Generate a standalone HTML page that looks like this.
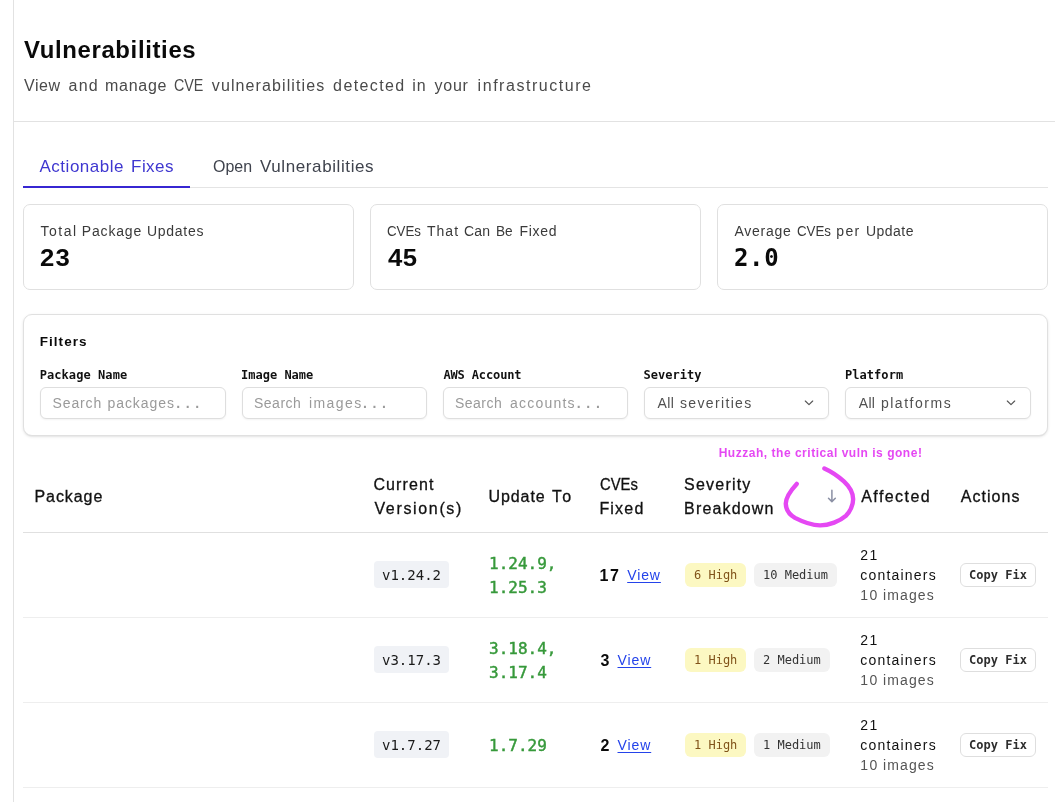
<!DOCTYPE html>
<html lang="en">
<head>
<meta charset="utf-8">
<title>Vulnerabilities</title>
<style>
*{box-sizing:border-box;margin:0;padding:0}
html,body{width:1055px;height:802px;overflow:hidden;background:#fff}
body{font-family:"Liberation Sans",sans-serif;color:#0a0a0a;position:relative}
h1,p,label{font-weight:400;font-size:16px}
#app{position:absolute;left:0;top:0;width:1055px;height:802px;will-change:transform}
.t{position:absolute;white-space:nowrap;line-height:20px}
.s{font-family:"Liberation Sans",sans-serif}
.m,.mono{font-family:"DejaVu Sans Mono","Liberation Mono",monospace}
.vline{position:absolute;left:13px;top:0;width:1px;height:802px;background:#e2e2e2}
.hline{position:absolute;left:13px;top:121px;width:1042px;height:1px;background:#e2e2e2}
.tabline{position:absolute;left:23px;top:187px;width:1025px;height:1px;background:#e4e4e4}
.tabsel{position:absolute;left:23px;top:186px;width:167px;height:2px;background:#3726d2}
.card{position:absolute;top:204px;width:331px;height:86px;border:1px solid #e0e0e0;border-radius:7px;background:#fff}
.filters{position:absolute;left:23px;top:314px;width:1025px;height:122px;border:1px solid #e0e0e0;border-radius:9px;background:#fff;box-shadow:0 1px 3px rgba(0,0,0,.1),0 1px 2px -1px rgba(0,0,0,.1)}
.fi{position:absolute;top:387px;height:32px;border:1px solid #dedede;border-radius:6px;background:#fff;box-shadow:0 1px 2px rgba(0,0,0,.05)}
.chev{position:absolute;top:398px;width:12px;height:10px}
.rowline{position:absolute;left:23px;width:1025px;height:1px;background:#eee}
.vb{position:absolute;left:374px;width:75px;height:27px;border-radius:4px;background:#f0f2f6;font-size:14px;line-height:29px;text-align:center;color:#1a1a1a}
.up{position:absolute;left:489px;font-size:16px;line-height:24px;font-weight:400;-webkit-text-stroke:.45px #37993b;color:#37993b;white-space:nowrap}
.bh,.bm{position:absolute;height:24px;border-radius:6px;font-size:12px;line-height:24px;padding:0 9px;white-space:nowrap}
.bh{left:685px;background:#fcf8c2;color:#80531a}
.bm{left:754px;background:#f2f2f2;color:#333}
.btn{position:absolute;left:960px;width:76px;height:24px;border:1px solid #dedede;border-radius:6px;font-size:12px;line-height:22px;font-weight:700;text-align:center;color:#2e2e2e;white-space:nowrap;background:#fff}
.arrow{position:absolute;left:827px;top:484px;font-size:14px;line-height:24px;color:#9095a8}
svg.ann{position:absolute;left:770px;top:455px}
</style>
</head>
<body>
<div id="app">
<div class="vline"></div>
<div class="hline"></div>
<div class="tabline"></div>
<div class="tabsel"></div>
<div class="card" style="left:23px"></div>
<div class="card" style="left:370px"></div>
<div class="card" style="left:717px"></div>
<div class="filters"></div>
<div class="fi" style="left:40px;width:186px"></div>
<div class="fi" style="left:242px;width:185px"></div>
<div class="fi" style="left:443px;width:185px"></div>
<div class="fi" style="left:644px;width:185px"></div>
<div class="fi" style="left:845px;width:186px"></div>
<svg class="chev" style="left:803px" viewBox="0 0 12 10"><path d="M2.3 3 L6 6.7 L9.7 3" fill="none" stroke="#555" stroke-width="1.15" stroke-linecap="round" stroke-linejoin="round"/></svg>
<svg class="chev" style="left:1005px" viewBox="0 0 12 10"><path d="M2.3 3 L6 6.7 L9.7 3" fill="none" stroke="#555" stroke-width="1.15" stroke-linecap="round" stroke-linejoin="round"/></svg>
<div class="rowline" style="top:532px;background:#e0e0e0"></div>
<div class="rowline" style="top:617px"></div>
<div class="rowline" style="top:702px"></div>
<div class="rowline" style="top:787px"></div>

<div class="vb mono" style="top:561px">v1.24.2</div>
<div class="up mono" style="top:552px">1.24.9,<br>1.25.3</div>
<div class="bh mono" style="top:563px">6 High</div>
<div class="bm mono" style="top:563px">10 Medium</div>
<div class="btn mono" style="top:563px">Copy Fix</div>
<div class="vb mono" style="top:646px">v3.17.3</div>
<div class="up mono" style="top:637px">3.18.4,<br>3.17.4</div>
<div class="bh mono" style="top:648px">1 High</div>
<div class="bm mono" style="top:648px">2 Medium</div>
<div class="btn mono" style="top:648px">Copy Fix</div>
<div class="vb mono" style="top:731px">v1.7.27</div>
<div class="up mono" style="top:734px">1.7.29</div>
<div class="bh mono" style="top:733px">1 High</div>
<div class="bm mono" style="top:733px">1 Medium</div>
<div class="btn mono" style="top:733px">Copy Fix</div>

<svg class="ann" width="100" height="80" viewBox="770 455 100 80" role="img" aria-label="sorted descending"><path d="M831.9 490.3V501.3M828.5 498.2L831.9 501.6L835.3 498.2" fill="none" stroke="#8b90a4" stroke-width="1.5" stroke-linecap="round" stroke-linejoin="round"/></svg>
<svg class="ann" width="100" height="80" viewBox="770 455 100 80"><path d="M824.4 468.5 C830 471 839 477 843.9 481.4 C850 487 853 493 853.1 498.9 C853.3 505 850 512 845.8 515.9 C840 521 829 525.5 819.9 525.4 C812 525.3 802 521.5 795 517.9 C790 515 786 510 785.8 503.9 C785.6 497 792 489 796.7 483.9" fill="none" stroke="#e548f3" stroke-width="4.4" stroke-linecap="round" stroke-linejoin="round"/></svg>
<h1><span class="t s" style="left:23.5px;top:39.6px;font-size:23px;font-weight:700;letter-spacing:0.62px;transform:scaleX(1.040);transform-origin:0 0;color:#0a0a0a;">Vulnerabilities</span></h1>
<p><span class="t s" style="left:24.1px;top:76.0px;font-size:16px;letter-spacing:0.50px;color:#4a4a4a;">View</span> <span class="t s" style="left:68.6px;top:76.0px;font-size:16px;letter-spacing:1.15px;color:#4a4a4a;">and</span> <span class="t s" style="left:105.0px;top:76.0px;font-size:16px;letter-spacing:0.74px;color:#4a4a4a;">manage</span> <span class="t s" style="left:174.1px;top:76.0px;font-size:16px;transform:scaleX(0.894);transform-origin:0 0;color:#4a4a4a;">CVE</span> <span class="t s" style="left:211.8px;top:76.0px;font-size:16px;letter-spacing:1.10px;color:#4a4a4a;">vulnerabilities</span> <span class="t s" style="left:333.1px;top:76.0px;font-size:16px;letter-spacing:1.39px;color:#4a4a4a;">detected</span> <span class="t s" style="left:412.2px;top:76.0px;font-size:16px;letter-spacing:0.90px;color:#4a4a4a;">in</span> <span class="t s" style="left:434.5px;top:76.0px;font-size:16px;letter-spacing:0.77px;color:#4a4a4a;">your</span> <span class="t s" style="left:477.6px;top:76.0px;font-size:16px;letter-spacing:1.54px;color:#4a4a4a;">infrastructure</span></p>
<div><span class="t s" style="left:39.5px;top:157.0px;font-size:17px;letter-spacing:0.51px;color:#3f37d0;">Actionable</span> <span class="t s" style="left:131.1px;top:157.0px;font-size:17px;letter-spacing:0.43px;color:#3f37d0;">Fixes</span></div>
<div><span class="t s" style="left:213.3px;top:157.0px;font-size:17px;transform:scaleX(0.938);transform-origin:0 0;color:#3f434d;">Open</span> <span class="t s" style="left:260.0px;top:157.0px;font-size:17px;letter-spacing:0.60px;color:#3f434d;">Vulnerabilities</span></div>
<div><span class="t s" style="left:40.6px;top:221.0px;font-size:14px;letter-spacing:1.47px;color:#3a3a3a;">Total</span> <span class="t s" style="left:81.8px;top:221.0px;font-size:14px;letter-spacing:0.83px;color:#3a3a3a;">Package</span> <span class="t s" style="left:147.0px;top:221.0px;font-size:14px;letter-spacing:0.72px;color:#3a3a3a;">Updates</span></div>
<div><span class="t s" style="left:39.5px;top:248.1px;font-size:24px;font-weight:700;letter-spacing:1.17px;transform:scaleX(1.070);transform-origin:0 0;color:#0a0a0a;">23</span></div>
<div><span class="t s" style="left:386.6px;top:221.0px;font-size:14px;transform:scaleX(0.950);transform-origin:0 0;color:#3a3a3a;">CVEs</span> <span class="t s" style="left:427.1px;top:221.0px;font-size:14px;letter-spacing:0.97px;color:#3a3a3a;">That</span> <span class="t s" style="left:464.1px;top:221.0px;font-size:14px;letter-spacing:0.10px;color:#3a3a3a;">Can</span> <span class="t s" style="left:496.0px;top:221.0px;font-size:14px;transform:scaleX(0.975);transform-origin:0 0;color:#3a3a3a;">Be</span> <span class="t s" style="left:519.4px;top:221.0px;font-size:14px;letter-spacing:0.75px;color:#3a3a3a;">Fixed</span></div>
<div><span class="t s" style="left:387.5px;top:248.1px;font-size:24px;font-weight:700;letter-spacing:0.36px;transform:scaleX(1.070);transform-origin:0 0;color:#0a0a0a;">45</span></div>
<div><span class="t s" style="left:734.5px;top:221.0px;font-size:14px;letter-spacing:0.72px;color:#3a3a3a;">Average</span> <span class="t s" style="left:796.5px;top:221.0px;font-size:14px;transform:scaleX(0.950);transform-origin:0 0;color:#3a3a3a;">CVEs</span> <span class="t s" style="left:836.3px;top:221.0px;font-size:14px;letter-spacing:1.35px;color:#3a3a3a;">per</span> <span class="t s" style="left:865.9px;top:221.0px;font-size:14px;letter-spacing:0.50px;color:#3a3a3a;">Update</span></div>
<div><span class="t m" style="left:733.9px;top:248.1px;font-size:24px;font-weight:700;letter-spacing:0.70px;color:#0a0a0a;">2.0</span></div>
<div><span class="t s" style="left:39.7px;top:331.9px;font-size:13.5px;font-weight:700;letter-spacing:1.05px;color:#0a0a0a;">Filters</span></div>
<label><span class="t m" style="left:39.7px;top:365.2px;font-size:12px;font-weight:700;letter-spacing:0.07px;color:#111;">Package Name</span></label>
<label><span class="t m" style="left:241.1px;top:365.2px;font-size:12px;font-weight:700;letter-spacing:-0.01px;color:#111;">Image Name</span></label>
<label><span class="t m" style="left:443.4px;top:365.2px;font-size:12px;font-weight:700;letter-spacing:-0.13px;color:#111;">AWS Account</span></label>
<label><span class="t m" style="left:643.5px;top:365.2px;font-size:12px;font-weight:700;letter-spacing:0.03px;color:#111;">Severity</span></label>
<label><span class="t m" style="left:844.9px;top:365.2px;font-size:12px;font-weight:700;letter-spacing:0.07px;color:#111;">Platform</span></label>
<div><span class="t s" style="left:52.5px;top:393.2px;font-size:14px;letter-spacing:0.88px;color:#9a9a9a;">Search</span> <span class="t s" style="left:107.4px;top:393.2px;font-size:14px;letter-spacing:0.97px;color:#9a9a9a;">packages</span> <span class="t s" style="left:176.2px;top:393.2px;font-size:14px;font-weight:700;letter-spacing:5.65px;color:#9a9a9a;">...</span></div>
<div><span class="t s" style="left:254.0px;top:393.2px;font-size:14px;letter-spacing:0.50px;color:#9a9a9a;">Search</span> <span class="t s" style="left:308.9px;top:393.2px;font-size:14px;letter-spacing:1.44px;color:#9a9a9a;">images</span> <span class="t s" style="left:363.0px;top:393.2px;font-size:14px;font-weight:700;letter-spacing:5.60px;color:#9a9a9a;">...</span></div>
<div><span class="t s" style="left:454.9px;top:393.2px;font-size:14px;letter-spacing:0.50px;color:#9a9a9a;">Search</span> <span class="t s" style="left:509.9px;top:393.2px;font-size:14px;letter-spacing:1.24px;color:#9a9a9a;">accounts</span> <span class="t s" style="left:576.7px;top:393.2px;font-size:14px;font-weight:700;letter-spacing:5.75px;color:#9a9a9a;">...</span></div>
<div><span class="t s" style="left:657.4px;top:392.8px;font-size:14px;letter-spacing:0.50px;color:#505050;">All</span> <span class="t s" style="left:679.9px;top:392.8px;font-size:14px;letter-spacing:1.36px;color:#505050;">severities</span></div>
<div><span class="t s" style="left:858.8px;top:392.8px;font-size:14px;letter-spacing:0.25px;color:#505050;">All</span> <span class="t s" style="left:880.9px;top:392.8px;font-size:14px;letter-spacing:1.53px;color:#505050;">platforms</span></div>
<div><span class="t s" style="left:34.5px;top:487.0px;font-size:16px;letter-spacing:0.92px;color:#111;-webkit-text-stroke:.3px #111;">Package</span></div>
<div><span class="t s" style="left:373.4px;top:475.0px;font-size:16px;letter-spacing:1.13px;color:#111;-webkit-text-stroke:.3px #111;">Current</span></div>
<div><span class="t s" style="left:374.4px;top:498.6px;font-size:16px;letter-spacing:1.66px;color:#111;-webkit-text-stroke:.3px #111;">Version(s)</span></div>
<div><span class="t s" style="left:488.5px;top:487.0px;font-size:16px;letter-spacing:0.92px;color:#111;-webkit-text-stroke:.3px #111;">Update</span> <span class="t s" style="left:552.1px;top:487.0px;font-size:16px;letter-spacing:2.20px;color:#111;-webkit-text-stroke:.3px #111;">To</span></div>
<div><span class="t s" style="left:599.5px;top:475.0px;font-size:16px;transform:scaleX(0.925);transform-origin:0 0;color:#111;-webkit-text-stroke:.3px #111;">CVEs</span></div>
<div><span class="t s" style="left:599.4px;top:498.6px;font-size:16px;letter-spacing:1.20px;color:#111;-webkit-text-stroke:.3px #111;">Fixed</span></div>
<div><span class="t s" style="left:684.1px;top:475.0px;font-size:16px;letter-spacing:1.21px;color:#111;-webkit-text-stroke:.3px #111;">Severity</span></div>
<div><span class="t s" style="left:684.1px;top:498.6px;font-size:16px;letter-spacing:1.15px;color:#111;-webkit-text-stroke:.3px #111;">Breakdown</span></div>
<div><span class="t s" style="left:861.2px;top:487.0px;font-size:16px;letter-spacing:1.44px;color:#111;-webkit-text-stroke:.3px #111;">Affected</span></div>
<div><span class="t s" style="left:960.7px;top:487.0px;font-size:16px;letter-spacing:1.05px;color:#111;-webkit-text-stroke:.3px #111;">Actions</span></div>
<div><span class="t s" style="left:718.7px;top:443.0px;font-size:12px;font-weight:700;letter-spacing:0.52px;color:#e548f3;">Huzzah, the critical vuln is gone!</span></div>
<div><span class="t s" style="left:599.4px;top:565.5px;font-size:16px;font-weight:700;letter-spacing:1.70px;color:#0a0a0a;">17</span></div>
<div><span class="t s" style="left:627.2px;top:565.0px;font-size:14px;letter-spacing:0.90px;color:#2443ea;text-decoration:underline;text-underline-offset:1.5px;text-decoration-thickness:1px;">View</span></div>
<div><span class="t s" style="left:860.2px;top:545.0px;font-size:14px;letter-spacing:1.50px;color:#111;">21</span></div>
<div><span class="t s" style="left:860.2px;top:565.0px;font-size:14px;letter-spacing:1.21px;color:#111;">containers</span></div>
<div><span class="t s" style="left:860.2px;top:585.0px;font-size:14px;letter-spacing:1.50px;color:#555;">10</span> <span class="t s" style="left:883.0px;top:585.0px;font-size:14px;letter-spacing:1.12px;color:#555;">images</span></div>
<div><span class="t s" style="left:600.4px;top:650.5px;font-size:16px;font-weight:700;color:#0a0a0a;">3</span></div>
<div><span class="t s" style="left:617.5px;top:650.0px;font-size:14px;letter-spacing:0.90px;color:#2443ea;text-decoration:underline;text-underline-offset:1.5px;text-decoration-thickness:1px;">View</span></div>
<div><span class="t s" style="left:860.2px;top:630.0px;font-size:14px;letter-spacing:1.50px;color:#111;">21</span></div>
<div><span class="t s" style="left:860.2px;top:650.0px;font-size:14px;letter-spacing:1.21px;color:#111;">containers</span></div>
<div><span class="t s" style="left:860.2px;top:670.0px;font-size:14px;letter-spacing:1.50px;color:#555;">10</span> <span class="t s" style="left:883.0px;top:670.0px;font-size:14px;letter-spacing:1.12px;color:#555;">images</span></div>
<div><span class="t s" style="left:600.4px;top:735.5px;font-size:16px;font-weight:700;color:#0a0a0a;">2</span></div>
<div><span class="t s" style="left:617.5px;top:735.0px;font-size:14px;letter-spacing:0.90px;color:#2443ea;text-decoration:underline;text-underline-offset:1.5px;text-decoration-thickness:1px;">View</span></div>
<div><span class="t s" style="left:860.2px;top:715.0px;font-size:14px;letter-spacing:1.50px;color:#111;">21</span></div>
<div><span class="t s" style="left:860.2px;top:735.0px;font-size:14px;letter-spacing:1.21px;color:#111;">containers</span></div>
<div><span class="t s" style="left:860.2px;top:755.0px;font-size:14px;letter-spacing:1.50px;color:#555;">10</span> <span class="t s" style="left:883.0px;top:755.0px;font-size:14px;letter-spacing:1.12px;color:#555;">images</span></div>
</div>
</body>
</html>
